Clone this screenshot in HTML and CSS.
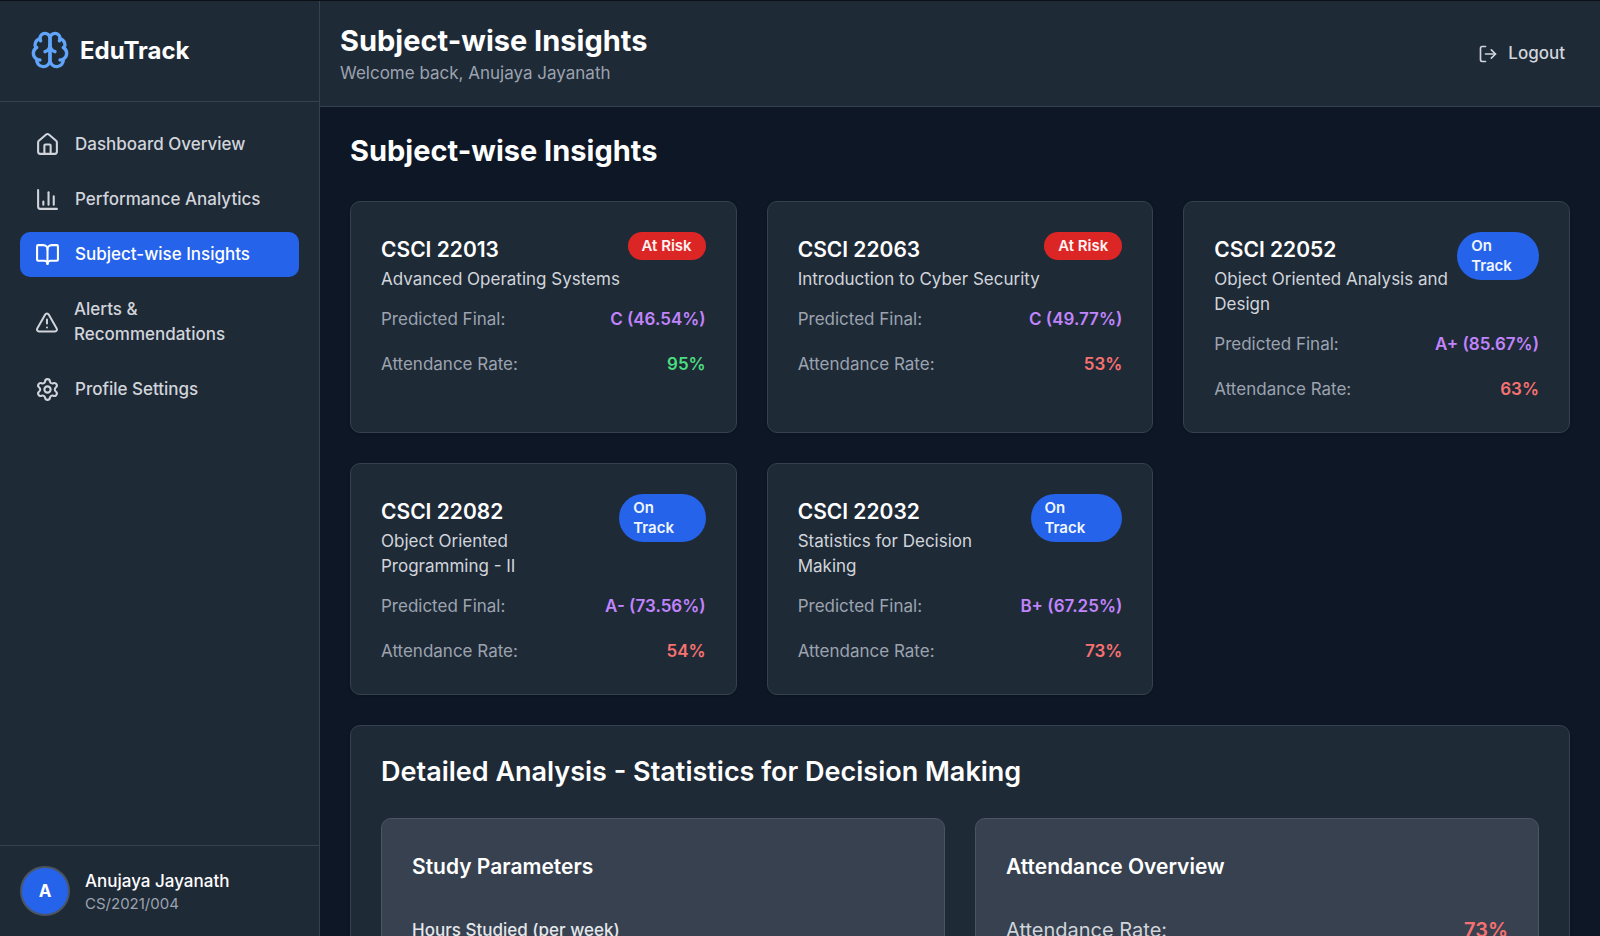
FILE: index.html
```html
<!DOCTYPE html>
<html lang="en">
<head>
<meta charset="utf-8">
<meta name="viewport" content="width=device-width, initial-scale=1">
<title>EduTrack</title>
<link rel="stylesheet" href="styles.css">
</head>
<body class="app">
<aside class="sidebar">
  <div class="brand">
    <svg class="brand-icon icon" viewBox="0 0 24 24" aria-hidden="true"><path d="M12 5a3 3 0 1 0-5.997.125 4 4 0 0 0-2.526 5.77 4 4 0 0 0 .556 6.588A4 4 0 1 0 12 18Z"/><path d="M12 5a3 3 0 1 1 5.997.125 4 4 0 0 1 2.526 5.77 4 4 0 0 1-.556 6.588A4 4 0 1 1 12 18Z"/><path d="M15 13a4.5 4.5 0 0 1-3-4 4.5 4.5 0 0 1-3 4"/><path d="M17.599 6.5a3 3 0 0 0 .399-1.375"/><path d="M6.003 5.125A3 3 0 0 0 6.401 6.5"/><path d="M3.477 10.896a4 4 0 0 1 .585-.396"/><path d="M19.938 10.5a4 4 0 0 1 .585.396"/><path d="M6 18a4 4 0 0 1-1.967-.516"/><path d="M19.967 17.484A4 4 0 0 1 18 18"/></svg>
    <span class="brand-name">EduTrack</span>
  </div>
  <nav class="nav">
    <button type="button" class="nav-item"><svg class="nav-icon icon" viewBox="0 0 24 24" aria-hidden="true"><path d="M15 21v-8a1 1 0 0 0-1-1h-4a1 1 0 0 0-1 1v8"/><path d="M3 10a2 2 0 0 1 .709-1.528l7-5.999a2 2 0 0 1 2.582 0l7 5.999A2 2 0 0 1 21 10v9a2 2 0 0 1-2 2H5a2 2 0 0 1-2-2z"/></svg><span>Dashboard Overview</span></button>
    <button type="button" class="nav-item"><svg class="nav-icon icon" viewBox="0 0 24 24" aria-hidden="true"><path d="M3 3v16a2 2 0 0 0 2 2h16"/><path d="M18 17V9"/><path d="M13 17V5"/><path d="M8 17v-3"/></svg><span>Performance Analytics</span></button>
    <button type="button" class="nav-item active" aria-current="page"><svg class="nav-icon icon" viewBox="0 0 24 24" aria-hidden="true"><path d="M12 7v14"/><path d="M3 18a1 1 0 0 1-1-1V4a1 1 0 0 1 1-1h5a4 4 0 0 1 4 4 4 4 0 0 1 4-4h5a1 1 0 0 1 1 1v13a1 1 0 0 1-1 1h-6a3 3 0 0 0-3 3 3 3 0 0 0-3-3z"/></svg><span>Subject-wise Insights</span></button>
    <button type="button" class="nav-item"><svg class="nav-icon icon" viewBox="0 0 24 24" aria-hidden="true"><path d="m21.73 18-8-14a2 2 0 0 0-3.48 0l-8 14A2 2 0 0 0 4 21h16a2 2 0 0 0 1.73-3"/><path d="M12 9v4"/><path d="M12 17h.01"/></svg><span>Alerts &amp; Recommendations</span></button>
    <button type="button" class="nav-item"><svg class="nav-icon icon" viewBox="0 0 24 24" aria-hidden="true"><path d="M9.671 4.136a2.34 2.34 0 0 1 4.659 0 2.34 2.34 0 0 0 3.319 1.915 2.34 2.34 0 0 1 2.33 4.033 2.34 2.34 0 0 0 0 3.831 2.34 2.34 0 0 1-2.33 4.033 2.34 2.34 0 0 0-3.319 1.915 2.34 2.34 0 0 1-4.659 0 2.34 2.34 0 0 0-3.32-1.915 2.34 2.34 0 0 1-2.33-4.033 2.34 2.34 0 0 0 0-3.831A2.34 2.34 0 0 1 6.35 6.051a2.34 2.34 0 0 0 3.319-1.915"/><circle cx="12" cy="12" r="3"/></svg><span>Profile Settings</span></button>
  </nav>
  <div class="user">
    <span class="avatar">A</span>
    <div class="user-text">
      <p class="user-name">Anujaya Jayanath</p>
      <p class="user-id">CS/2021/004</p>
    </div>
  </div>
</aside>
<div class="page">
  <header class="topbar">
    <div class="topbar-text">
      <h1 class="title">Subject-wise Insights</h1>
      <p class="welcome">Welcome back, Anujaya Jayanath</p>
    </div>
    <button type="button" class="logout"><svg class="logout-icon icon" viewBox="0 0 24 24" aria-hidden="true"><path d="m16 17 5-5-5-5"/><path d="M21 12H9"/><path d="M9 21H5a2 2 0 0 1-2-2V5a2 2 0 0 1 2-2h4"/></svg>Logout</button>
  </header>
  <main class="content">
    <h2 class="title">Subject-wise Insights</h2>
    <section class="cards">
      <article class="card">
        <div class="card-head"><div><h3 class="code">CSCI 22013</h3><p class="subject">Advanced Operating Systems</p></div><span class="badge risk">At Risk</span></div>
        <dl class="stats"><div class="stat"><dt>Predicted Final:</dt><dd class="grade">C (46.54%)</dd></div><div class="stat"><dt>Attendance Rate:</dt><dd class="good">95%</dd></div></dl>
      </article>
      <article class="card">
        <div class="card-head"><div><h3 class="code">CSCI 22063</h3><p class="subject">Introduction to Cyber Security</p></div><span class="badge risk">At Risk</span></div>
        <dl class="stats"><div class="stat"><dt>Predicted Final:</dt><dd class="grade">C (49.77%)</dd></div><div class="stat"><dt>Attendance Rate:</dt><dd class="poor">53%</dd></div></dl>
      </article>
      <article class="card">
        <div class="card-head"><div><h3 class="code">CSCI 22052</h3><p class="subject">Object Oriented Analysis and Design</p></div><span class="badge track">On Track</span></div>
        <dl class="stats"><div class="stat"><dt>Predicted Final:</dt><dd class="grade">A+ (85.67%)</dd></div><div class="stat"><dt>Attendance Rate:</dt><dd class="poor">63%</dd></div></dl>
      </article>
      <article class="card">
        <div class="card-head"><div><h3 class="code">CSCI 22082</h3><p class="subject">Object Oriented Programming - II</p></div><span class="badge track">On Track</span></div>
        <dl class="stats"><div class="stat"><dt>Predicted Final:</dt><dd class="grade">A- (73.56%)</dd></div><div class="stat"><dt>Attendance Rate:</dt><dd class="poor">54%</dd></div></dl>
      </article>
      <article class="card">
        <div class="card-head"><div><h3 class="code">CSCI 22032</h3><p class="subject">Statistics for Decision Making</p></div><span class="badge track">On Track</span></div>
        <dl class="stats"><div class="stat"><dt>Predicted Final:</dt><dd class="grade">B+ (67.25%)</dd></div><div class="stat"><dt>Attendance Rate:</dt><dd class="poor">73%</dd></div></dl>
      </article>
    </section>
    <section class="card detail">
      <h2 class="detail-title">Detailed Analysis - Statistics for Decision Making</h2>
      <div class="panels">
        <div class="panel">
          <h3 class="panel-title">Study Parameters</h3>
          <p class="param">Hours Studied (per week)</p>
        </div>
        <div class="panel">
          <h3 class="panel-title">Attendance Overview</h3>
          <div class="overview"><span>Attendance Rate:</span><span class="overview-value">73%</span></div>
        </div>
      </div>
    </section>
  </main>
</div>
</body>
</html>
```
FILE: styles.css
```css
*, *::before, *::after { box-sizing: border-box; }
h1, h2, h3, p, dl, dd { margin: 0; }
button { font: inherit; cursor: pointer; }

.app {
  margin: 0;
  display: flex;
  height: 100vh;
  overflow: hidden;
  border-top: 1px solid #0a0f18;
  background: #0e1726;
  color: #fff;
  font-family: Inter, "Liberation Sans", sans-serif;
  font-size: 17px;
  line-height: 25px;
}
.icon {
  fill: none;
  stroke: currentColor;
  stroke-width: 2;
  stroke-linecap: round;
  stroke-linejoin: round;
}

/* Sidebar */
.sidebar {
  flex: 0 0 320px;
  display: flex;
  flex-direction: column;
  border-right: 1px solid #35414f;
  background: #1f2a37;
}
.brand {
  display: flex;
  align-items: center;
  gap: 10px;
  padding: 29px 30px 31px;
  border-bottom: 1px solid #35414f;
}
.brand-icon { width: 40px; height: 40px; color: #60a5fa; }
.brand-name { font-size: 24px; line-height: 35px; font-weight: 700; }
.nav {
  flex: 1;
  display: flex;
  flex-direction: column;
  gap: 10px;
  padding: 20px;
}
.nav-item {
  display: flex;
  align-items: center;
  gap: 15px;
  padding: 10px 15px;
  border: 0;
  border-radius: 10px;
  background: none;
  color: #d1d5db;
  font-weight: 500;
  text-align: left;
}
.nav-item.active { background: #2563eb; color: #fff; }
.nav-icon { width: 25px; height: 25px; }
.user {
  display: flex;
  align-items: center;
  gap: 15px;
  padding: 20px;
  border-top: 1px solid #35414f;
}
.avatar {
  display: flex;
  align-items: center;
  justify-content: center;
  width: 50px;
  height: 50px;
  border: 2px solid #4b5563;
  border-radius: 50%;
  background: #2563eb;
  font-weight: 700;
}
.user-name { font-weight: 500; }
.user-id { color: #9ca3af; font-size: 15px; line-height: 20px; }

/* Page */
.page { flex: 1; min-width: 0; display: flex; flex-direction: column; }
.topbar {
  display: flex;
  align-items: center;
  justify-content: space-between;
  padding: 20px;
  border-bottom: 1px solid #35414f;
  background: #1f2a37;
}
.title { font-size: 29px; line-height: 40px; font-weight: 700; }
.welcome { color: #9ca3af; }
.logout {
  display: flex;
  align-items: center;
  gap: 10px;
  padding: 10px 15px;
  border: 0;
  background: none;
  color: #d1d5db;
  font-weight: 500;
}
.logout-icon { width: 20px; height: 20px; }
.content {
  flex: 1;
  min-height: 0;
  display: flex;
  flex-direction: column;
  gap: 30px;
  padding: 24px 30px;
  overflow-y: auto;
  scrollbar-width: none;
}

/* Subject cards */
.cards { display: grid; grid-template-columns: repeat(3, 1fr); gap: 30px; }
.card {
  padding: 30px;
  border: 1px solid #35414f;
  border-radius: 10px;
  background: #1f2a37;
  box-shadow: 0 1px 3px #0003;
}
.card-head {
  display: flex;
  align-items: flex-start;
  justify-content: space-between;
  margin-bottom: 15px;
}
.code { font-size: 21px; line-height: 35px; font-weight: 600; }
.subject { color: #d1d5db; }
.badge {
  padding: 4px 14px;
  border-radius: 24px;
  font-size: 15px;
  line-height: 20px;
  font-weight: 600;
}
.badge.risk { background: #dc2626; color: #fef2f2; }
.badge.track { background: #2563eb; color: #eff6ff; }
.stats { display: flex; flex-direction: column; gap: 20px; }
.stat { display: flex; justify-content: space-between; color: #9ca3af; }
.stat dd { font-weight: 600; }
.stat .grade { color: #c084fc; }
.stat .good { color: #4ade80; }
.stat .poor { color: #f87171; }

/* Detailed analysis */
.detail { flex: none; }
.detail-title { margin-bottom: 30px; font-size: 27px; line-height: 32px; font-weight: 600; }
.panels { display: grid; grid-template-columns: 1fr 1fr; gap: 30px; }
.panel {
  padding: 30px;
  border: 1px solid #4b5563;
  border-radius: 10px;
  background: #374150;
}
.panel-title { margin-bottom: 30px; font-size: 21px; line-height: 35px; font-weight: 600; }
.param { color: #e5e7eb; line-height: 32px; font-weight: 500; }
.overview {
  display: flex;
  justify-content: space-between;
  color: #d1d5db;
  font-size: 20px;
  line-height: 32px;
}
.overview-value { color: #f87171; font-weight: 600; }
```
